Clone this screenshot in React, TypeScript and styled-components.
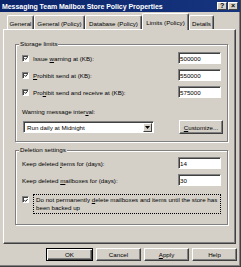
import { createGlobalStyle, styled } from "styled-components";

const GlobalStyle = createGlobalStyle`
    html, body {
        margin: 0;
        padding: 0;
        background: #d4d0c8;
    }
    body {
        font-family: "Liberation Sans", Arial, sans-serif;
        font-size: 6.2px;
        color: #000;
    }
`;

const tabs = [
    { label: "General", w: 27 },
    { label: "General (Policy)", w: 51 },
    { label: "Database (Policy)", w: 57 },
    { label: "Limits (Policy)", w: 47, active: true },
    { label: "Details", w: 25 },
];

function Check() {
    return (
        <CheckBox>
            <svg width="5" height="5" viewBox="0 0 5 5">
                <path d="M0.6 2.2 L1.9 3.6 L4.4 0.9" fill="none" stroke="#000" strokeWidth="1.2" />
            </svg>
        </CheckBox>
    );
}

export default function App() {
    return (
        <>
            <GlobalStyle />
            <Window>
                <TitleBar>
                    <span>Messaging Team Mailbox Store Policy Properties</span>
                    <TitleButtons>
                        <TitleButton>?</TitleButton>
                        <TitleButton>×</TitleButton>
                    </TitleButtons>
                </TitleBar>
                <TabStrip>
                    {tabs.map((t) => (
                        <Tab key={t.label} $w={t.w} $active={!!t.active}>
                            {t.label}
                        </Tab>
                    ))}
                </TabStrip>
                <Panel>
                    <Group $pt={4} $pb={7}>
                        <Legend>Storage limits</Legend>
                        <Rows>
                            <Row>
                                <CheckLabel>
                                    <Check />
                                    <span>
                                        Issue <u>w</u>arning at (KB):
                                    </span>
                                </CheckLabel>
                                <Field readOnly value="500000" />
                            </Row>
                            <Row>
                                <CheckLabel>
                                    <Check />
                                    <span>
                                        <u>P</u>rohibit send at (KB):
                                    </span>
                                </CheckLabel>
                                <Field readOnly value="550000" />
                            </Row>
                            <Row>
                                <CheckLabel>
                                    <Check />
                                    <span>
                                        Pro<u>h</u>ibit send and receive at (KB):
                                    </span>
                                </CheckLabel>
                                <Field readOnly value="575000" />
                            </Row>
                        </Rows>
                        <IntervalLabel>
                            Warning message inter<u>v</u>al:
                        </IntervalLabel>
                        <SelectRow>
                            <Select>
                                <span>Run daily at Midnight</span>
                                <DropButton>
                                    <svg width="5" height="3" viewBox="0 0 5 3">
                                        <path d="M0 0 H5 L2.5 3 Z" fill="#000" />
                                    </svg>
                                </DropButton>
                            </Select>
                            <Button $w={44} $h={14}>
                                <u>C</u>ustomize...
                            </Button>
                        </SelectRow>
                    </Group>
                    <Group $pt={3} $pb={10} $mt={4}>
                        <Legend>Deletion settings</Legend>
                        <Rows>
                            <Row>
                                <span>
                                    Keep deleted <u>i</u>tems for (days):
                                </span>
                                <Field readOnly value="14" />
                            </Row>
                            <Row>
                                <span>
                                    Keep deleted <u>m</u>ailboxes for (days):
                                </span>
                                <Field readOnly value="30" />
                            </Row>
                        </Rows>
                        <WrapCheck>
                            <Check />
                            <FocusText>
                                Do not permanently <u>d</u>elete mailboxes and items until the store has
                                <br />
                                been backed up
                            </FocusText>
                        </WrapCheck>
                    </Group>
                </Panel>
                <Footer>
                    <Button $w={47} $h={13} $default>
                        OK
                    </Button>
                    <Button $w={45} $h={13}>
                        Cancel
                    </Button>
                    <Button $w={45} $h={13}>
                        <u>A</u>pply
                    </Button>
                    <Button $w={45} $h={13}>
                        Help
                    </Button>
                </Footer>
            </Window>
        </>
    );
}

const Window = styled.div`
    width: 241px;
    height: 267px;
    box-sizing: border-box;
    background: #d4d0c8;
    display: flex;
    flex-direction: column;
    border-right: 1px solid #404040;
    border-bottom: 1px solid #404040;
    box-shadow: inset -1px -1px 0 #808080;
    overflow: hidden;
`;

const TitleBar = styled.div`
    height: 12px;
    flex-shrink: 0;
    display: flex;
    align-items: center;
    justify-content: space-between;
    padding: 0 2px 0 2px;
    background: linear-gradient(90deg, #0a246a, #16357f);
    color: #fff;
    font-weight: bold;
    font-size: 7px;
    letter-spacing: -0.05px;
    white-space: nowrap;
`;

const TitleButtons = styled.div`
    display: flex;
    gap: 1px;
`;

const TitleButton = styled.div`
    width: 10px;
    height: 8px;
    box-sizing: border-box;
    background: #d4d0c8;
    border-top: 1px solid #fff;
    border-left: 1px solid #fff;
    border-right: 1px solid #404040;
    border-bottom: 1px solid #404040;
    color: #000;
    font-size: 7px;
    line-height: 6px;
    text-align: center;
`;

const TabStrip = styled.div`
    height: 16px;
    margin-top: 1px;
    padding-left: 7px;
    display: flex;
    align-items: flex-end;
    flex-shrink: 0;
    position: relative;
    z-index: 1;
`;

const Tab = styled.div<{ $w: number; $active: boolean }>`
    width: ${(p) => p.$w}px;
    height: ${(p) => (p.$active ? 17 : 14)}px;
    margin-bottom: ${(p) => (p.$active ? -1 : 0)}px;
    box-sizing: border-box;
    border-top: 1px solid #fff;
    border-left: 1px solid #fff;
    border-right: 1px solid #404040;
    border-radius: 2px 2px 0 0;
    box-shadow: inset -1px 0 0 #808080;
    background: #d4d0c8;
    display: flex;
    align-items: center;
    justify-content: center;
    padding-top: ${(p) => (p.$active ? 0 : 1)}px;
    white-space: nowrap;
`;

const Panel = styled.div`
    margin-left: 3px;
    width: 233px;
    height: 215px;
    box-sizing: border-box;
    flex-shrink: 0;
    border-top: 1px solid #fff;
    border-left: 1px solid #fff;
    border-right: 1px solid #404040;
    border-bottom: 1px solid #404040;
    box-shadow: inset -1px -1px 0 #808080;
    padding: 10px 7px 0 11px;
    display: flex;
    flex-direction: column;
`;

const Group = styled.fieldset<{ $pt: number; $pb: number; $mt?: number }>`
    margin: ${(p) => p.$mt ?? 0}px 0 0 0;
    padding: ${(p) => p.$pt}px 6px ${(p) => p.$pb}px 6px;
    min-width: 0;
    border: 1px solid #808080;
    box-shadow: 1px 1px 0 #fff, inset 1px 1px 0 #fff;
`;

const Legend = styled.legend`
    margin-left: -3px;
    padding: 0 1px;
    line-height: 8px;
    background: #d4d0c8;
`;

const Rows = styled.div`
    display: flex;
    flex-direction: column;
    gap: 5px;
`;

const Row = styled.div`
    height: 12px;
    display: flex;
    align-items: center;
    justify-content: space-between;
    white-space: nowrap;
`;

const CheckLabel = styled.label`
    display: flex;
    align-items: center;
    gap: 4px;
`;

const CheckBox = styled.span`
    width: 7px;
    height: 7px;
    flex-shrink: 0;
    box-sizing: border-box;
    background: #fff;
    border-top: 1px solid #808080;
    border-left: 1px solid #808080;
    border-right: 1px solid #fff;
    border-bottom: 1px solid #fff;
    box-shadow: inset 1px 1px 0 #404040;
    display: flex;
    align-items: center;
    justify-content: center;
    padding: 1px 0 0 1px;
`;

const Field = styled.input`
    width: 43px;
    height: 12px;
    box-sizing: border-box;
    margin: 0;
    padding: 1px 1px 0 1px;
    font: inherit;
    color: #000;
    background: #fff;
    border-top: 1px solid #808080;
    border-left: 1px solid #808080;
    border-right: 1px solid #fff;
    border-bottom: 1px solid #fff;
    box-shadow: inset 1px 1px 0 #404040;
    outline: none;
    line-height: 8px;
    vertical-align: top;
`;

const IntervalLabel = styled.div`
    margin-top: 10px;
    line-height: 8px;
`;

const SelectRow = styled.div`
    margin-top: 4px;
    height: 14px;
    display: flex;
    align-items: center;
    justify-content: space-between;
    margin-right: -2px;
`;

const Select = styled.div`
    margin-left: 1px;
    width: 131px;
    height: 12px;
    box-sizing: border-box;
    background: #fff;
    border-top: 1px solid #808080;
    border-left: 1px solid #808080;
    border-right: 1px solid #fff;
    border-bottom: 1px solid #fff;
    box-shadow: inset 1px 1px 0 #404040;
    display: flex;
    align-items: center;
    justify-content: space-between;
    padding: 1px 1px 0 3px;
    white-space: nowrap;
`;

const DropButton = styled.span`
    width: 9px;
    height: 9px;
    box-sizing: border-box;
    background: #d4d0c8;
    border-top: 1px solid #fff;
    border-left: 1px solid #fff;
    border-right: 1px solid #404040;
    border-bottom: 1px solid #404040;
    display: flex;
    align-items: center;
    justify-content: center;
`;

const Button = styled.button<{ $w: number; $h: number; $default?: boolean }>`
    width: ${(p) => p.$w}px;
    height: ${(p) => p.$h}px;
    box-sizing: border-box;
    margin: 0;
    padding: 0;
    font: inherit;
    color: #000;
    background: #d4d0c8;
    border: 1px solid ${(p) => (p.$default ? "#000" : "#404040")};
    ${(p) =>
        p.$default
            ? "box-shadow: inset 1px 1px 0 #fff, inset -1px -1px 0 #404040, inset -2px -2px 0 #808080;"
            : "border-top-color: #fff; border-left-color: #fff; box-shadow: inset -1px -1px 0 #808080;"}
    display: flex;
    align-items: center;
    justify-content: center;
    white-space: nowrap;
`;

const WrapCheck = styled.div`
    margin-top: 8px;
    display: flex;
    align-items: flex-start;
    gap: 4px;
    & > span:first-child {
        margin-top: 2px;
    }
`;

const FocusText = styled.div`
    width: 188px;
    box-sizing: border-box;
    border: 1px dotted #000;
    padding: 1px 1px 1px 2px;
    line-height: 8px;
    white-space: nowrap;
`;

const Footer = styled.div`
    margin-top: 4px;
    padding-right: 3px;
    display: flex;
    justify-content: flex-end;
    gap: 3px;
`;
